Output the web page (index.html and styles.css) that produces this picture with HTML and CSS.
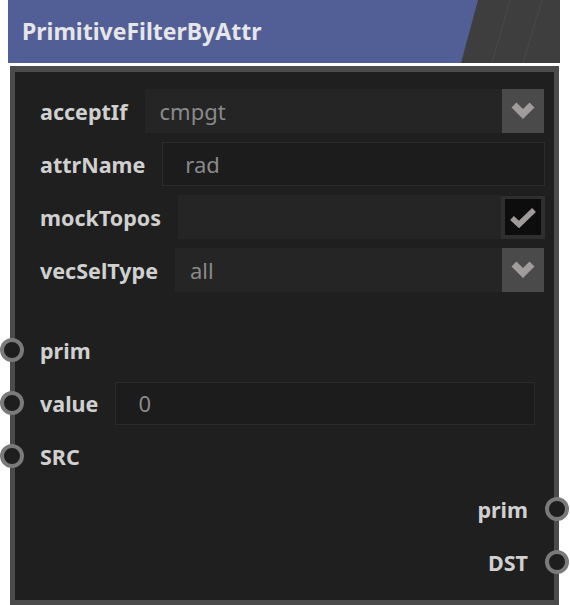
FILE: index.html
```html
<!DOCTYPE html>
<html>
<head>
<meta charset="utf-8">
<link rel="stylesheet" href="styles.css">
</head>
<body>
<div class="node">
  <div class="title">
    <span class="title-text">PrimitiveFilterByAttr</span>
    <svg class="title-deco" width="99" height="63" viewBox="0 0 99 63">
      <polygon points="17,0 99,0 99,63 0,63" fill="#3e3e3e"/>
      <line x1="49" y1="0" x2="31" y2="63" stroke="#4a4a4a" stroke-width="1"/>
      <line x1="81" y1="0" x2="62" y2="63" stroke="#4a4a4a" stroke-width="1"/>
    </svg>
  </div>
  <div class="body">
    <div class="params">
      <div class="row">
        <span class="label">acceptIf</span>
        <div class="field select"><span class="val">cmpgt</span></div>
        <div class="btn-drop">
          <svg width="42" height="44" viewBox="0 0 42 44"><polyline points="12,16 21,25 30,16" fill="none" stroke="#a19c9c" stroke-width="7"/></svg>
        </div>
      </div>
      <div class="row">
        <span class="label">attrName</span>
        <div class="field text"><span class="val pad">rad</span></div>
      </div>
      <div class="row">
        <span class="label">mockTopos</span>
        <div class="field select"></div>
        <div class="check">
          <div class="check-in">
            <svg width="36" height="36" viewBox="0 0 36 36"><polyline points="7,19 14,25.5 29,11" fill="none" stroke="#a09b9b" stroke-width="5.5"/></svg>
          </div>
        </div>
      </div>
      <div class="row">
        <span class="label">vecSelType</span>
        <div class="field select"><span class="val">all</span></div>
        <div class="btn-drop">
          <svg width="42" height="44" viewBox="0 0 42 44"><polyline points="12,16 21,25 30,16" fill="none" stroke="#a19c9c" stroke-width="7"/></svg>
        </div>
      </div>
    </div>
    <div class="sockets">
      <div class="row sock-in">
        <span class="dot"></span>
        <span class="label">prim</span>
      </div>
      <div class="row sock-in">
        <span class="dot"></span>
        <span class="label">value</span>
        <div class="field text short"><span class="val pad">0</span></div>
      </div>
      <div class="row sock-in">
        <span class="dot"></span>
        <span class="label">SRC</span>
      </div>
      <div class="row sock-out">
        <span class="label">prim</span>
        <span class="dot"></span>
      </div>
      <div class="row sock-out">
        <span class="label">DST</span>
        <span class="dot"></span>
      </div>
    </div>
  </div>
</div>
</body>
</html>
```

FILE: styles.css
```css
body {
  margin: 0;
  background: #ffffff;
  font-family: "Noto Sans", "Open Sans", sans-serif;
}
.node {
  margin-left: 8px;
  width: 552px;
}
.title {
  height: 63px;
  background: #525f96;
  display: flex;
  align-items: center;
}
.title-text {
  padding-left: 14px;
  font-size: 23px;
  font-weight: 700;
  color: #e6e6e9;
  padding-bottom: 1px;
}
.title-deco {
  margin-left: auto;
  display: block;
}
.body {
  margin-top: 3px;
  margin-left: 2px;
  width: 549px;
  height: 539px;
  box-sizing: border-box;
  border: 5px solid #4b4b4b;
  border-top-width: 6px;
  background: #1f1f1f;
  padding: 17px 9px 0 25px;
}
.params {
  display: flex;
  flex-direction: column;
  gap: 9px;
}
.row {
  display: flex;
  align-items: center;
  height: 44px;
  position: relative;
}
.label {
  font-size: 21.5px;
  font-weight: 700;
  color: #d0d0d0;
  margin-right: 17px;
  white-space: nowrap;
}
.field {
  flex: 1;
  height: 44px;
  box-sizing: border-box;
  display: flex;
  align-items: center;
}
.field.select {
  background: #252525;
}
.field.text {
  background: #1c1c1c;
  border: 1px solid #2b2b2b;
}
.field.short {
  margin-right: 10px;
  height: 43px;
}
.val {
  font-size: 22px;
  color: #8a8a8a;
  padding-left: 15px;
}
.val.pad {
  padding-left: 22px;
}
.btn-drop {
  width: 42px;
  height: 44px;
  background: #4a4a4a;
  margin-right: 1px;
}
.btn-drop svg, .check svg {
  display: block;
}
.check {
  width: 44px;
  height: 43px;
  background: #2f2f2f;
  box-sizing: border-box;
  padding: 3px 4px 4px 4px;
}
.check-in {
  width: 36px;
  height: 36px;
  background: #0d0d0d;
}
.sockets {
  margin-top: 36px;
  display: flex;
  flex-direction: column;
  gap: 9px;
}
.sock-out {
  justify-content: flex-end;
}
.sock-out .label {
  margin-right: 17px;
}
.dot {
  position: absolute;
  width: 24px;
  height: 24px;
  box-sizing: border-box;
  border-radius: 50%;
  border: 4px solid #7a7a7a;
  background: #1e1e1e;
  top: 10px;
}
.sock-in .dot {
  left: -40px;
}
.sock-out .dot {
  right: -24px;
}
```
